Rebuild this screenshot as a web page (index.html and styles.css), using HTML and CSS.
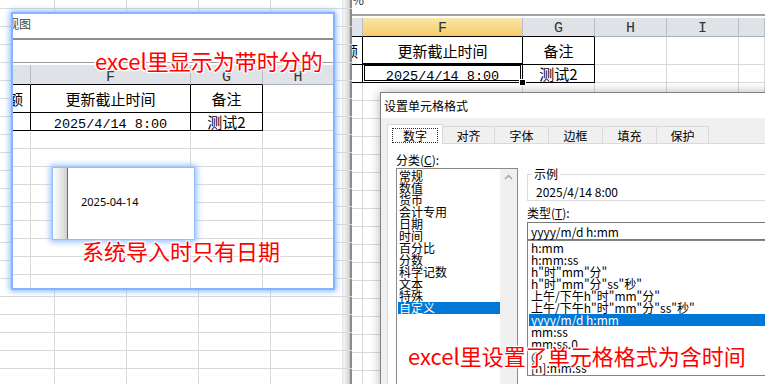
FILE: index.html
```html
<!DOCTYPE html>
<html lang="zh-CN">
  <head>
    <meta charset="UTF-8" />
    <meta name="viewport" content="width=device-width, initial-scale=1.0" />
    <title>导入日期与单元格格式</title>
    <link rel="stylesheet" href="styles.css">
  </head>
  <body>
    <!-- 左：系统导入后的表格 -->
    <div class="shot-left">
      <div class="win">
        <div class="win-title">视图</div>
        <div class="formula"></div>
        <div class="sheet">
          <div class="row head">
            <div class="c bt"></div>
            <div class="c bt">F</div>
            <div class="c bt">G</div>
            <div class="c last">H</div>
          </div>
          <div class="row r1">
            <div class="c bl cut">额</div>
            <div class="c bl">更新截止时间</div>
            <div class="c bl">备注</div>
            <div class="c last"></div>
          </div>
          <div class="row r2">
            <div class="c bl"></div>
            <div class="c bl mono">2025/4/14 8:00</div>
            <div class="c bl">测试2</div>
            <div class="c last"></div>
          </div>
          <div class="row fill">
            <div class="c"></div>
            <div class="c"></div>
            <div class="c"></div>
            <div class="c last"></div>
          </div>
        </div>
        <div class="popup">
          <div class="popup-edge"></div>
          <span>2025-04-14</span>
        </div>
      </div>
      <p class="note note-a">excel里显示为带时分的</p>
      <p class="note note-b">系统导入时只有日期</p>
    </div>

    <div class="divider"></div>

    <!-- 右：excel 单元格格式 -->
    <div class="shot-right">
      <div class="topbar"><span>%</span></div>
      <div class="sheet sheet-r">
        <div class="row head">
          <div class="c bt"></div>
          <div class="c bt sel">F</div>
          <div class="c bt">G</div>
          <div class="c">H</div>
          <div class="c">I</div>
          <div class="c"></div>
        </div>
        <div class="row r1">
          <div class="c bl cut">额</div>
          <div class="c bl">更新截止时间</div>
          <div class="c bl">备注</div>
          <div class="c"></div>
          <div class="c"></div>
          <div class="c"></div>
        </div>
        <div class="row r2">
          <div class="c bl"></div>
          <div class="c bl mono act">2025/4/14 8:00</div>
          <div class="c bl">测试2</div>
          <div class="c"></div>
          <div class="c"></div>
          <div class="c"></div>
        </div>
        <div class="row fill">
          <div class="c"></div>
          <div class="c"></div>
          <div class="c"></div>
          <div class="c"></div>
          <div class="c"></div>
          <div class="c"></div>
        </div>
      </div>

      <div class="dialog">
        <div class="dlg-title">设置单元格格式</div>
        <div class="tabs">
          <div class="tab on"><span>数字</span></div>
          <div class="tab">对齐</div>
          <div class="tab">字体</div>
          <div class="tab">边框</div>
          <div class="tab">填充</div>
          <div class="tab">保护</div>
        </div>
        <div class="panel">
          <div class="col-cat">
            <div class="lbl">分类(<u>C</u>):</div>
            <div class="listbox cat-list">
              <div class="items">
                <div class="it">常规</div>
                <div class="it">数值</div>
                <div class="it">货币</div>
                <div class="it">会计专用</div>
                <div class="it">日期</div>
                <div class="it">时间</div>
                <div class="it">百分比</div>
                <div class="it">分数</div>
                <div class="it">科学记数</div>
                <div class="it">文本</div>
                <div class="it">特殊</div>
                <div class="it on">自定义</div>
              </div>
              <div class="vscroll">
                <svg width="17" height="10" viewBox="0 0 17 10">
                  <polyline points="5,7 8.5,3.5 12,7" fill="none" stroke="#a6a6a6" stroke-width="1.5" />
                </svg>
              </div>
            </div>
          </div>
          <div class="col-type">
            <fieldset class="sample">
              <legend>示例</legend>
              <div class="sample-val">2025/4/14 8:00</div>
            </fieldset>
            <div class="lbl">类型(<u>T</u>):</div>
            <div class="type-input">yyyy/m/d h:mm</div>
            <div class="listbox type-list">
              <div class="items">
                <div class="it">h:mm</div>
                <div class="it">h:mm:ss</div>
                <div class="it">h"时"mm"分"</div>
                <div class="it">h"时"mm"分"ss"秒"</div>
                <div class="it">上午/下午h"时"mm"分"</div>
                <div class="it">上午/下午h"时"mm"分"ss"秒"</div>
                <div class="it on">yyyy/m/d h:mm</div>
                <div class="it">mm:ss</div>
                <div class="it">mm:ss.0</div>
                <div class="it">@</div>
                <div class="it">[h]:mm:ss</div>
              </div>
            </div>
          </div>
        </div>
      </div>

      <p class="note note-c">excel里设置了单元格格式为含时间</p>
    </div>
  </body>
</html>
```

FILE: styles.css
```css
* {
  box-sizing: border-box;
}

body {
  margin: 0;
  width: 765px;
  height: 384px;
  overflow: hidden;
  display: flex;
  font-family: "Noto Sans CJK SC", sans-serif;
  background: #fff;
}

/* ---------- left screenshot ---------- */

.shot-left {
  position: relative;
  width: 342px;
  height: 384px;
  padding: 14px 0 0 13px;
  background-color: #fff;
  background-image:
    linear-gradient(to right, #d9d9d9 1px, transparent 1px),
    linear-gradient(#d9d9d9 1px, transparent 1px);
  background-size: 72px 100%, 100% 18px;
  background-position: 54px 0, 0 8px;
}

.win {
  position: relative;
  width: 320px;
  height: 274px;
  display: flex;
  flex-direction: column;
  overflow: hidden;
  background: #fff;
  box-shadow: 0 0 0 2px #84b5ff, 0 0 6px 3px #7fb0ff;
}

.win-title {
  height: 26px;
  border-bottom: 2px solid #8e8e8e;
  font-size: 12px;
  line-height: 20px;
  color: #444;
  text-indent: -6px;
  white-space: nowrap;
}

.formula {
  height: 23px;
  border-bottom: 1px solid #9c9c9c;
}

.sheet {
  flex: 1;
  display: flex;
  flex-direction: column;
  padding-top: 2px;
}

.row {
  display: grid;
  grid-template-columns: 18px 160px 72px 1fr;
}

.sheet-r .row {
  grid-template-columns: 11px 160px 72px 72px 72px 1fr;
}

.c {
  border-right: 1px solid #d9d9d9;
  border-bottom: 1px solid #d9d9d9;
  text-align: center;
  white-space: nowrap;
  color: #000;
}

.c.last {
  border-right: 0;
}

.head .c {
  height: 20px;
  overflow: hidden;
  background: #dfe3e8;
  border-right-color: #b9bec6;
  border-bottom-color: #a9b0b9;
  font: 15px/25px "Liberation Mono", monospace;
  color: #333;
}

.sheet-r .head .c {
  height: 19px;
  line-height: 22px;
}

.head .c.bt {
  border-bottom-color: #000;
}

.head .c.sel {
  background: linear-gradient(#fae6aa, #f7cb6a);
}

.r1 .c {
  height: 28px;
  font-size: 15px;
  line-height: 27px;
}

.r2 .c {
  height: 18px;
  font-size: 15px;
  line-height: 17px;
}

.c.bl {
  border-right-color: #000;
  border-bottom-color: #000;
}

.c.mono {
  font: 13.5px/23px "Liberation Mono", monospace;
}

.c.cut {
  overflow: hidden;
  text-align: left;
  text-indent: -5px;
}

.sheet-r .c.cut {
  text-indent: -9px;
}

.fill {
  flex: 1;
}

.fill .c {
  border-bottom: 0;
  background: repeating-linear-gradient(to bottom, transparent 0 17px, #d9d9d9 17px 18px);
}

.popup {
  position: absolute;
  left: 40px;
  top: 154px;
  width: 141px;
  height: 71px;
  display: flex;
  align-items: center;
  padding-bottom: 5px;
  background: #fff;
  box-shadow: 0 0 0 1px #8fbdff, 0 0 6px 3px #94c0ff;
  font: 11px "Noto Sans", sans-serif;
  color: #000;
}

.popup-edge {
  align-self: stretch;
  width: 15px;
  margin-bottom: -5px;
  border-right: 1px solid #6b6b6b;
  background: linear-gradient(to right, #fdfdfd, #e2e2e2 70%, #cfcfcf);
}

.popup span {
  padding-left: 13px;
}

.note {
  position: absolute;
  margin: 0;
  font-size: 22px;
  line-height: 22px;
  color: #ff0000;
  white-space: nowrap;
  text-shadow:
    1px 1px 0 #fff, -1px -1px 0 #fff, 1px -1px 0 #fff, -1px 1px 0 #fff,
    0 0 3px #fff, 0 0 3px #fff;
}

.note-a {
  left: 95px;
  top: 49px;
}

.note-b {
  left: 82px;
  top: 239px;
}

.note-c {
  left: 56px;
  top: 344px;
}

.divider {
  width: 10px;
  height: 384px;
  background:
    linear-gradient(#d9d9d9 1px, transparent 1px) 0 8px / 100% 18px,
    linear-gradient(to right, #e2e2e2, #f4f4f4 20%, #d6d6d6 70%, #b5b5b5 82%, #8c8c8c 85%, #8c8c8c);
}

/* ---------- right screenshot ---------- */

.shot-right {
  position: relative;
  flex: 1;
  height: 384px;
  display: flex;
  flex-direction: column;
  overflow: hidden;
}

.topbar {
  height: 16px;
  flex-shrink: 0;
  border-bottom: 2px solid #a3a3a3;
  font-size: 13px;
  line-height: 14px;
  overflow: hidden;
}

.topbar span {
  display: block;
  margin-top: -7px;
  color: #333;
}

.c.act {
  position: relative;
}

.c.act::after {
  content: "";
  position: absolute;
  top: -2px;
  left: -1px;
  right: -1px;
  bottom: -1px;
  border: 3px double #000;
}

.c.act::before {
  content: "";
  position: absolute;
  right: -3px;
  bottom: -3px;
  width: 5px;
  height: 5px;
  background: #000;
  outline: 1px solid #fff;
  z-index: 1;
}

.dialog {
  position: absolute;
  left: 28px;
  top: 92px;
  width: 420px;
  height: 320px;
  display: flex;
  flex-direction: column;
  border: 1px solid #808080;
  background: #f0f0f0;
  box-shadow: 0 0 10px rgba(0, 0, 0, 0.3);
  font-size: 12px;
  color: #000;
}

.dlg-title {
  height: 25px;
  padding-left: 3px;
  background: #fff;
  line-height: 25px;
}

.tabs {
  display: flex;
  align-items: flex-end;
  height: 25px;
  padding: 6px 0 0 6px;
}

.tab {
  width: 54px;
  height: 17px;
  padding-top: 1px;
  border: 1px solid #d9d9d9;
  border-bottom: 0;
  text-align: center;
  line-height: 16px;
}

.tab + .tab {
  border-left: 0;
}

.tab:nth-child(2),
.tab:nth-child(6) {
  width: 52px;
}

.tab.on {
  position: relative;
  z-index: 1;
  width: 56px;
  height: 20px;
  margin-bottom: -1px;
  padding-top: 3px;
  background: #fff;
}

.tab.on span {
  display: inline-block;
  height: 15px;
  padding: 0 10px;
  border: 1px dotted #333;
  line-height: 13px;
}

.panel {
  flex: 1;
  margin-left: 6px;
  display: grid;
  grid-template-columns: 122px 1fr;
  column-gap: 9px;
  align-items: start;
  padding: 9px 0 0 8px;
  background: #fff;
  border: 1px solid #d9d9d9;
}

.lbl {
  line-height: 14px;
  white-space: nowrap;
}

.col-cat .lbl {
  margin-bottom: 1px;
}

.listbox {
  display: flex;
  background: #fff;
  border: 1px solid #8a8a8a;
}

.items {
  flex: 1;
  padding: 1px 0 0 1px;
}

.it {
  height: 12px;
  padding-left: 1px;
  line-height: 12px;
  white-space: nowrap;
}

.it.on {
  background: #0078d7;
  color: #fff;
}

.cat-list {
  height: 240px;
}

.vscroll {
  width: 17px;
  padding-top: 3px;
  background: #f0f0f0;
}

.vscroll svg {
  display: block;
}

.col-type {
  margin-top: 15px;
}

.sample {
  margin: 0;
  padding: 0 0 2px 4px;
  border: 1px solid #dcdcdc;
}

.sample legend {
  padding: 0 2px;
  line-height: 12px;
}

.sample-val {
  padding: 6px 0 0 4px;
  line-height: 12px;
}

.col-type .lbl {
  margin-top: 6px;
  line-height: 12px;
}

.type-input {
  height: 18px;
  margin-top: 3px;
  padding-left: 3px;
  border: 1px solid #7a7a7a;
  line-height: 18px;
}

.type-list {
  height: 136px;
  border-color: #828282;
}

.type-list .it {
  padding-left: 2px;
}
```
